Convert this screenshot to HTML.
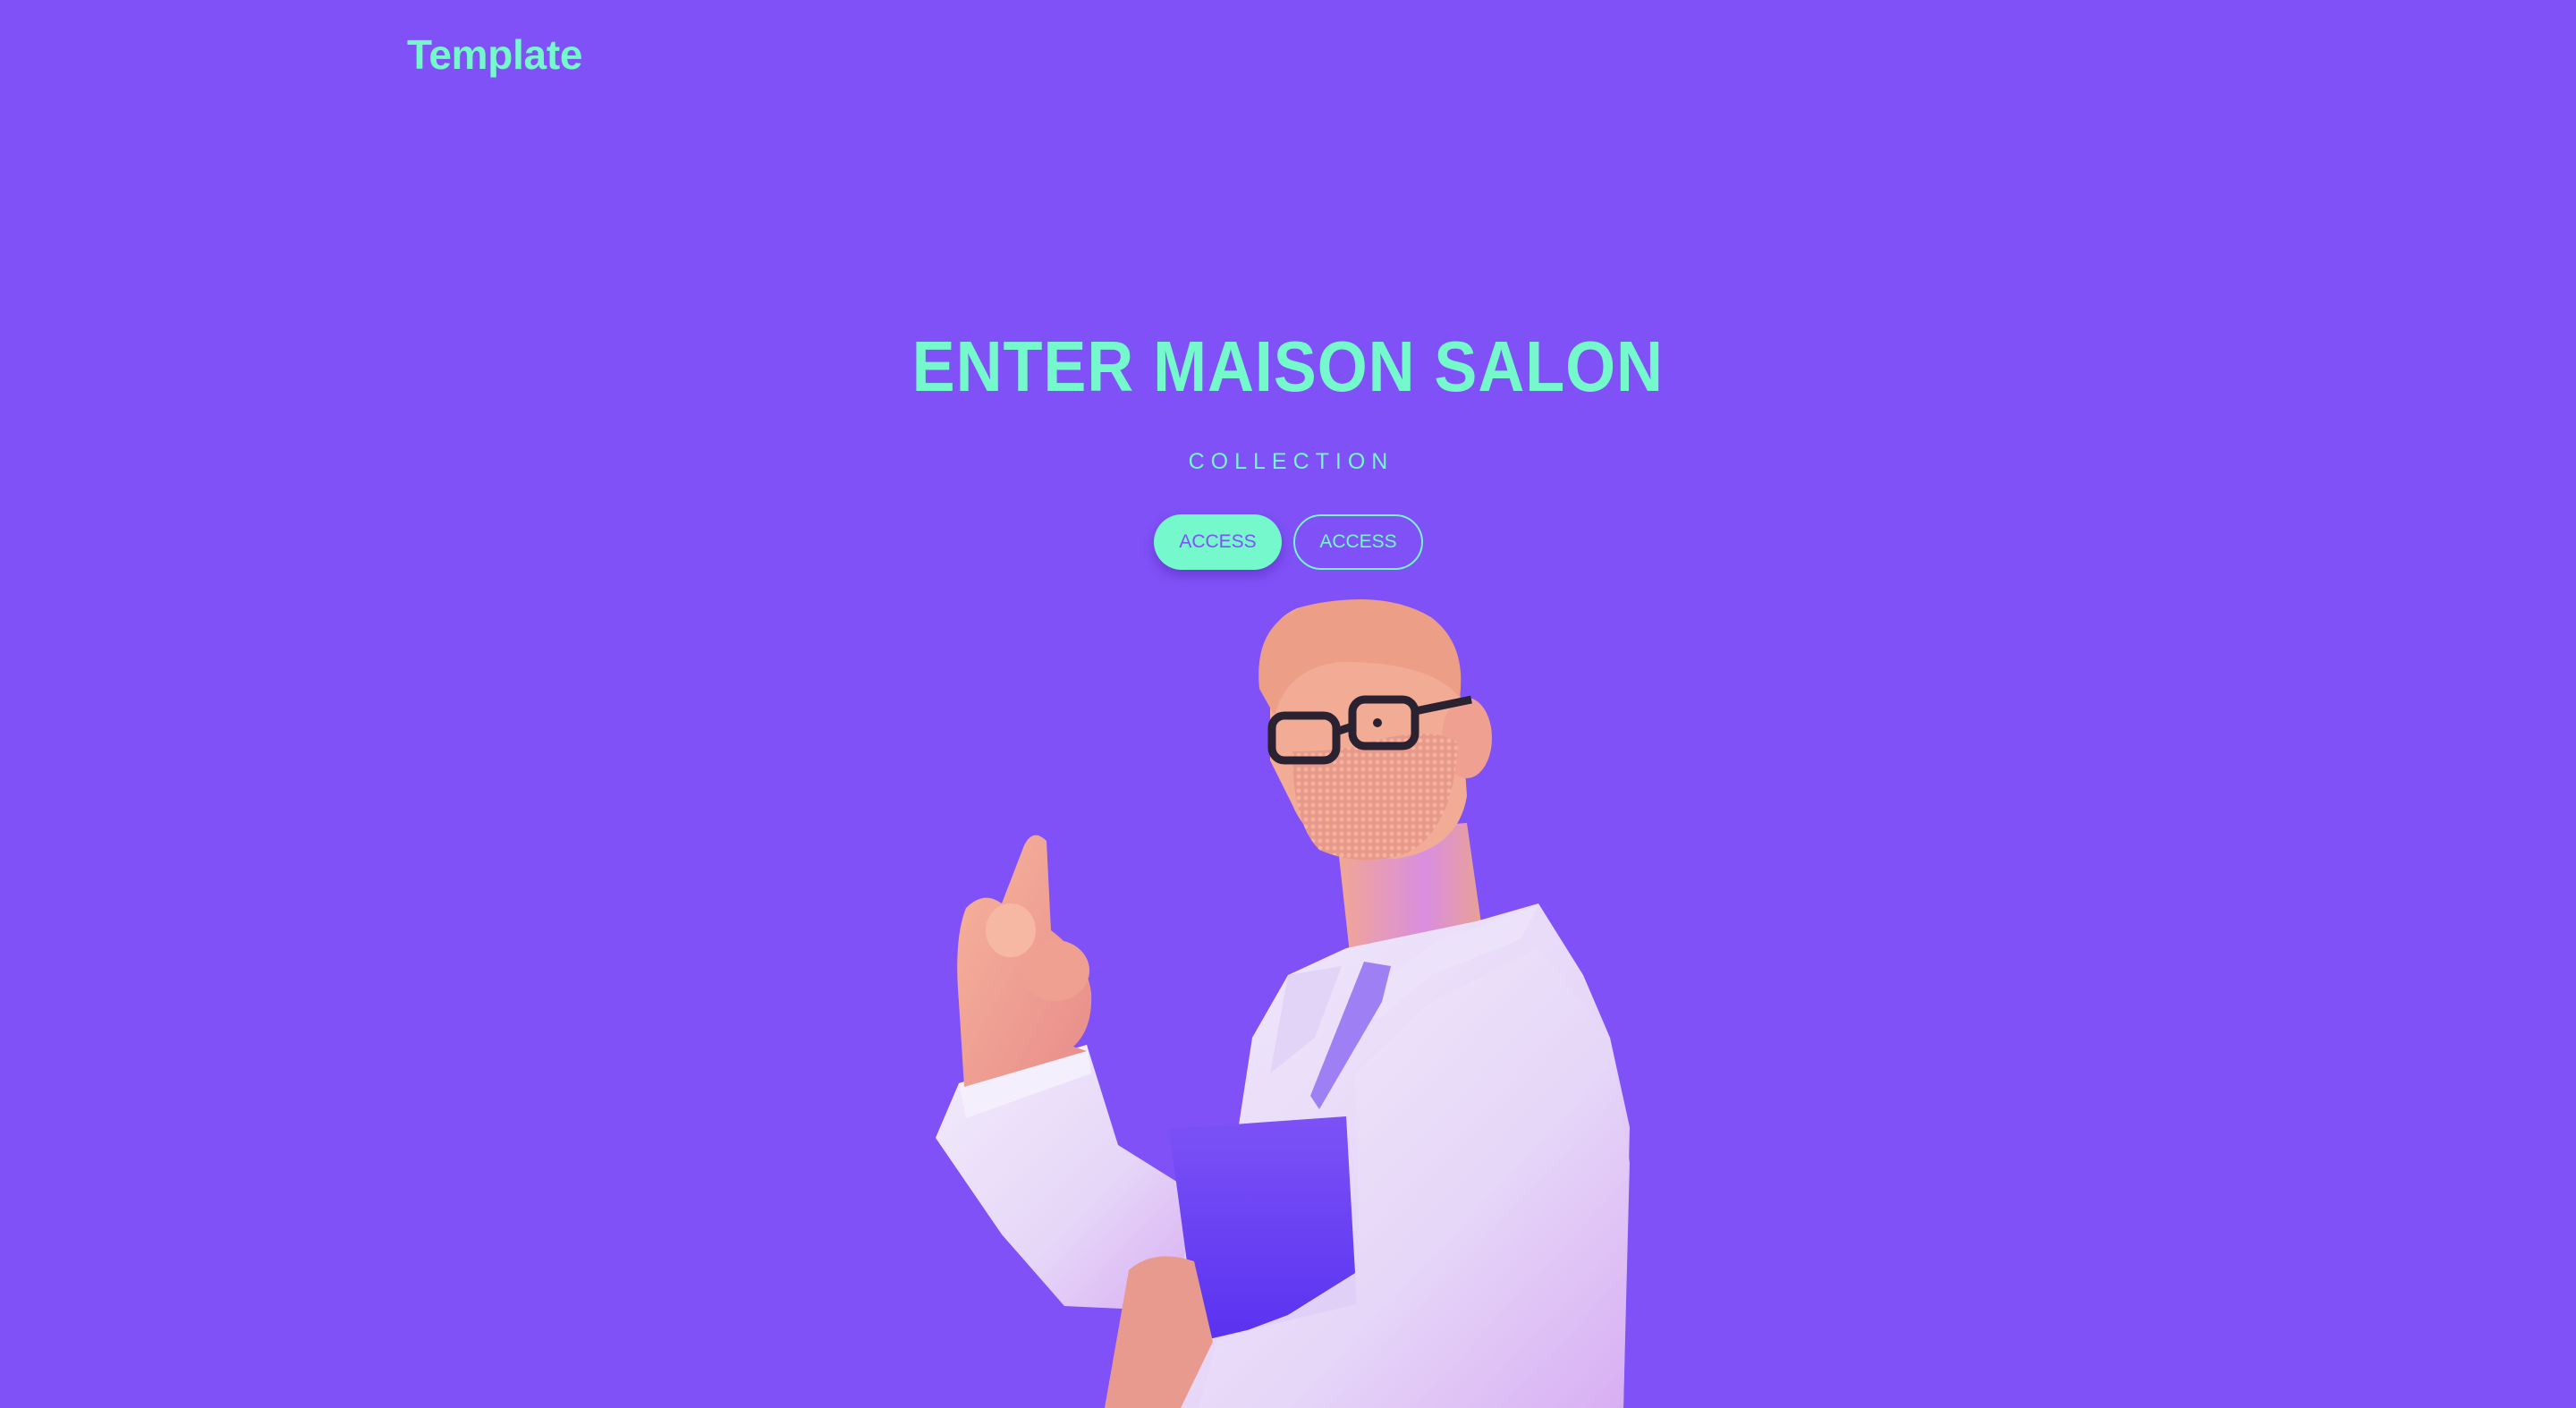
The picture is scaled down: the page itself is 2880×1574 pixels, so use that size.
<!DOCTYPE html>
<html><head><meta charset="utf-8"><style>
html,body{margin:0;padding:0}
body{width:2880px;height:1574px;background:#7f51f7;overflow:hidden;position:relative;font-family:"Liberation Sans",sans-serif}
.logo{position:absolute;left:455px;top:34px;font-size:46px;font-weight:bold;color:#74f8cc;letter-spacing:-0.3px}
.h1{position:absolute;left:0;width:2880px;top:370px;text-align:center;font-size:80px;font-weight:bold;color:#74f8cc;line-height:1}
.h1 span{display:inline-block;transform:scaleX(0.9);letter-spacing:1px}
.sub{position:absolute;left:0;width:2880px;top:502px;text-align:center;font-size:25px;color:#74f8cc;letter-spacing:7px;text-indent:7px}
.btn{position:absolute;top:575px;height:62px;border-radius:31px;box-sizing:border-box;font-size:21px;line-height:62px;text-align:center;color:#7f51f7}
.b1{left:1290px;width:143px;background:#74f8cc;box-shadow:0 6px 12px rgba(60,20,150,.35)}
.b2{left:1446px;width:145px;border:2px solid #74f8cc;color:#74f8cc;line-height:58px}
svg{position:absolute;left:0;top:0}
</style></head><body>
<div class="logo">Template</div>
<div class="h1"><span>ENTER MAISON SALON</span></div>
<div class="sub">COLLECTION</div>
<div class="btn b1">ACCESS</div>
<div class="btn b2">ACCESS</div>
<svg width="2880" height="1574" viewBox="0 0 2880 1574">
<defs>
<linearGradient id="coat" x1="0" y1="0" x2="1" y2="1"><stop offset="0" stop-color="#f2ecfb"/><stop offset="0.6" stop-color="#e6d6f8"/><stop offset="1" stop-color="#d8aef3"/></linearGradient>
<linearGradient id="skin" x1="0" y1="0" x2="1" y2="1"><stop offset="0" stop-color="#f6b49c"/><stop offset="1" stop-color="#e88c8a"/></linearGradient>
<linearGradient id="neck" x1="0" y1="0" x2="1" y2="0"><stop offset="0" stop-color="#f2a792"/><stop offset="0.6" stop-color="#d98ee0"/><stop offset="1" stop-color="#eaa291"/></linearGradient>
<linearGradient id="fold" x1="0" y1="0" x2="0" y2="1"><stop offset="0" stop-color="#7c52f6"/><stop offset="1" stop-color="#5a32f0"/></linearGradient>
<pattern id="beard" width="8" height="8" patternUnits="userSpaceOnUse"><rect width="8" height="8" fill="#e8998a"/><circle cx="4" cy="4" r="2.5" fill="#f4b3a0"/></pattern>
</defs>
<path d="M1494 930 L1640 920 L1660 1060 L1510 1075 Z" fill="url(#neck)"/>
<path d="M1505 1060 L1650 1030 L1720 1010 L1770 1090 L1800 1160 L1822 1260 L1815 1574 L1245 1574 L1280 1470 L1380 1290 L1400 1160 L1440 1090 Z" fill="url(#coat)"/>
<path d="M1505 1062 L1540 1100 L1610 1050 L1720 1012 L1700 1050 L1600 1090 L1540 1140 Z" fill="#ece2fa"/>
<path d="M1525 1075 L1555 1080 L1545 1120 L1475 1240 L1465 1225 Z" fill="#9f80f4"/>
<path d="M1440 1090 L1500 1080 L1470 1160 L1420 1200 Z" fill="#e2d4f7"/>
<path d="M1072 1211 L1215 1168 L1250 1280 L1330 1330 L1320 1466 L1190 1460 L1120 1380 L1046 1272 Z" fill="url(#coat)"/>
<path d="M1072 1211 L1215 1168 L1220 1200 L1080 1250 Z" fill="#f4effc"/>
<path d="M1145 945 Q1155 925 1170 940 L1175 1040 Q1215 1070 1220 1110 Q1222 1150 1200 1170 L1215 1175 L1078 1215 L1072 1120 Q1066 1050 1080 1015 Q1100 995 1120 1010 Z" fill="url(#skin)"/>
<ellipse cx="1130" cy="1040" rx="28" ry="30" fill="#f6b8a2"/>
<ellipse cx="1180" cy="1085" rx="38" ry="34" fill="#f0a090"/>
<path d="M1307 1262 L1505 1248 L1517 1458 L1339 1500 Z" fill="url(#fold)"/>
<path d="M1262 1420 Q1290 1395 1335 1410 L1356 1500 L1320 1574 L1235 1574 Z" fill="#e99a8e"/>
<path d="M1515 1200 L1600 1120 L1720 1060 L1800 1160 L1822 1300 L1815 1574 L1340 1574 L1360 1500 L1440 1470 L1520 1420 Z" fill="url(#coat)" opacity="0.95"/>
<path d="M1420 760 Q1405 700 1450 680 Q1500 665 1560 680 Q1620 700 1632 770 L1640 890 Q1630 950 1560 960 Q1470 960 1445 900 L1420 850 Z" fill="#f2ac96"/>
<ellipse cx="1640" cy="825" rx="28" ry="45" fill="#efa090"/>
<path d="M1408 770 Q1400 690 1470 675 Q1550 660 1600 690 Q1640 720 1632 780 Q1600 740 1500 740 Q1440 745 1425 800 Z" fill="#ec9f86"/>
<path d="M1445 840 Q1500 840 1530 830 Q1600 810 1630 830 Q1625 930 1570 955 Q1520 970 1475 950 Q1445 920 1445 840 Z" fill="url(#beard)"/>
<g fill="none" stroke="#2a2230" stroke-width="9">
<rect x="1422" y="800" width="72" height="50" rx="14"/>
<rect x="1512" y="782" width="70" height="52" rx="14"/>
<path d="M1494 818 L1512 812 M1582 795 L1645 782"/>
</g>
<circle cx="1540" cy="808" r="5" fill="#2a2230"/>
</svg>
</body></html>
